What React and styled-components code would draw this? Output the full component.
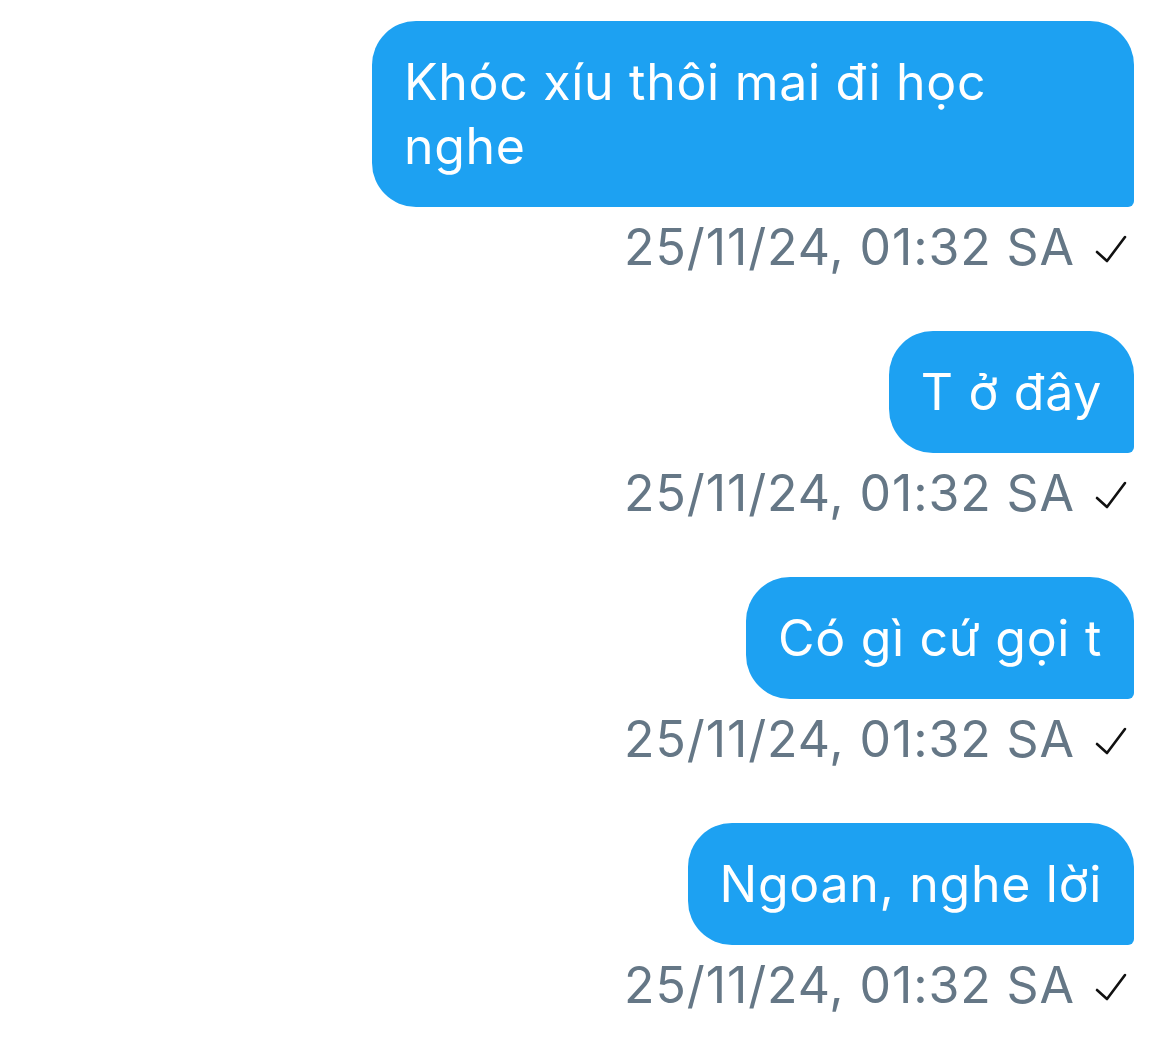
import React from 'react'
import styled, { createGlobalStyle } from 'styled-components'

const GlobalStyle = createGlobalStyle`
  html, body {
    margin: 0;
    padding: 0;
    background: #ffffff;
  }
  body {
    font-family: Inter, "Noto Sans", "Liberation Sans", sans-serif;
  }
`

const ChatView = styled.div`
  width: 100%;
  box-sizing: border-box;
  padding: 21px 36px 0 0;
  display: flex;
  flex-direction: column;
  align-items: flex-end;
`

const Message = styled.div`
  display: flex;
  flex-direction: column;
  align-items: flex-end;
  margin-bottom: 54px;
`

const Bubble = styled.div`
  box-sizing: border-box;
  max-width: 762px;
  padding: 29px 32px;
  background-color: #1da1f2;
  color: #ffffff;
  font-size: 50px;
  letter-spacing: 0.7px;
  line-height: 64px;
  border-radius: 44px 44px 6px 44px;
`

const Meta = styled.div`
  display: flex;
  flex-direction: row;
  align-items: center;
  gap: 20px;
  margin-top: 10px;
  padding-right: 7px;
  height: 60px;
`

const Time = styled.span`
  color: #657786;
  font-size: 50px;
  letter-spacing: 0.9px;
  line-height: 60px;
`

const Check = () => (
  <svg width='32' height='30' viewBox='0 0 32 30' fill='none' style={{ marginTop: 4 }}>
    <path d='M2 18 L12 27 L30 3' stroke='#111' strokeWidth='2.6' strokeLinecap='round' strokeLinejoin='round' />
  </svg>
)

const messages = [
  { id: 1, text: 'Khóc xíu thôi mai đi học nghe' },
  { id: 2, text: 'T ở đây' },
  { id: 3, text: 'Có gì cứ gọi t' },
  { id: 4, text: 'Ngoan, nghe lời' }
]

export default function App () {
  return (
    <>
      <GlobalStyle />
      <ChatView>
        {messages.map(msg => (
          <Message key={msg.id}>
            <Bubble>{msg.text}</Bubble>
            <Meta>
              <Time>25/11/24, 01:32 SA</Time>
              <Check />
            </Meta>
          </Message>
        ))}
      </ChatView>
    </>
  )
}
